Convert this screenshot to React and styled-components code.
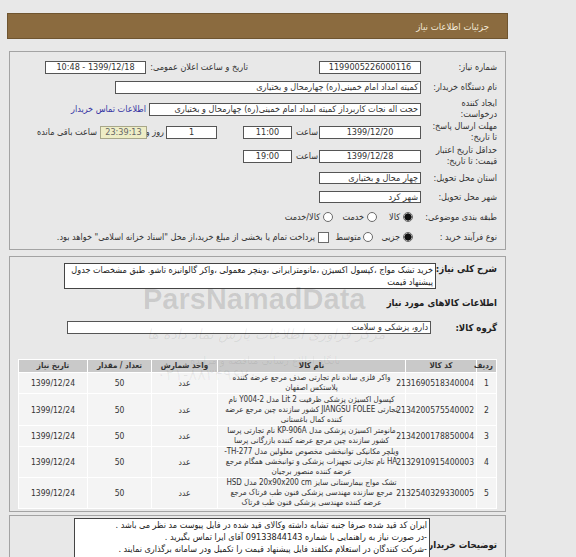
import React from "react";
import styled, { createGlobalStyle } from "styled-components";

const Global = createGlobalStyle`
  html, body { margin: 0; padding: 0; background: #e8e8e8; }
  body { font-family: "DejaVu Sans Condensed", "DejaVu Sans", sans-serif; color: #333; }
  * { box-sizing: border-box; }
`;

const Page = styled.div`
  position: relative;
  width: 501px;
  margin: 13px 0 0 7px;
  direction: rtl;
  font-size: 9px;
`;

const Header = styled.div`
  height: 26px;
  background: #8b6b3f;
  border: 1px solid #6f5530;
  display: flex;
  align-items: center;
  padding-right: 18px;
  color: #f3ead8;
  font-size: 9.5px;
`;

const Panel = styled.div`
  margin: ${(p) => p.$mt || 12}px 2px 0 2px;
  border: 1px solid #a3a3a3;
  padding: ${(p) => p.$pad || "6px 0 3px 0"};
`;

const Row = styled.div`
  display: flex;
  align-items: ${(p) => p.$align || "center"};
  height: ${(p) => (p.$h ? `${p.$h}px` : "auto")};
  margin-top: ${(p) => p.$mt || 0}px;
`;

const Label = styled.div`
  flex: none;
  width: ${(p) => p.$w || 84}px;
  padding-right: 8px;
  line-height: 11px;
  white-space: nowrap;
  font-weight: ${(p) => (p.$bold ? "bold" : "normal")};
  font-size: ${(p) => (p.$bold ? "9.5px" : "9px")};
  color: ${(p) => (p.$bold ? "#222" : "#333")};
`;

const Field = styled.div`
  flex: none;
  width: ${(p) => p.$w}px;
  height: ${(p) => p.$h || 13}px;
  margin-right: ${(p) => p.$m || 0}px;
  background: ${(p) => (p.$timer ? "#eeedc6" : "#fff")};
  border: 1px solid ${(p) => (p.$timer ? "#a8a78a" : "#555")};
  color: ${(p) => (p.$timer ? "#666" : "#333")};
  font-size: 9px;
  line-height: 11px;
  padding: 0 2px;
  text-align: ${(p) => p.$ta || "right"};
  white-space: nowrap;
  overflow: hidden;
`;

const Text = styled.div`
  flex: none;
  width: ${(p) => (p.$w ? `${p.$w}px` : "auto")};
  margin-right: ${(p) => p.$m || 0}px;
  white-space: nowrap;
  text-align: ${(p) => p.$ta || "right"};
  line-height: 11px;
`;

const Link = styled(Text)`
  color: #3535a3;
`;

const Radio = styled.span`
  flex: none;
  width: 10px;
  height: 10px;
  margin-right: ${(p) => p.$m || 0}px;
  border-radius: 50%;
  border: 1px solid #6a6a6a;
  background: ${(p) => (p.$on ? "radial-gradient(circle, #111 0 3px, #555 3.5px, #fff 4px)" : "#fff")};
`;

const Check = styled.span`
  flex: none;
  width: 11px;
  height: 11px;
  margin-right: ${(p) => p.$m || 0}px;
  border: 1px solid #6a6a6a;
  background: #fff;
`;

const TextArea = styled.div`
  flex: none;
  width: ${(p) => p.$w}px;
  min-height: ${(p) => p.$h}px;
  background: #fff;
  border: 1px solid #444;
  padding: 0 2px;
  line-height: 12px;
  font-size: 9px;
  color: #222;
  white-space: nowrap;
`;

const Section = styled.div`
  padding-right: 8px;
  margin-top: 7px;
  line-height: 13px;
  font-weight: bold;
  font-size: 9.5px;
  color: #222;
`;

const Table = styled.table`
  width: 478px;
  margin: 25px 8px 0 9px;
  border-collapse: collapse;
  table-layout: fixed;
  background: #fff;
`;

const Th = styled.th`
  height: 13px;
  background: #c9c9c9;
  border: 1px solid #fff;
  color: #333;
  font-weight: bold;
  font-size: 8px;
  line-height: 10px;
  padding: 0 3px;
  text-align: ${(p) => (p.$first ? "right" : "center")};
`;

const Td = styled.td`
  background: #f4f4f4;
  border: 1px solid #fff;
  height: ${(p) => p.$h}px;
  line-height: 10px;
  padding: 0 2px;
  text-align: center;
  white-space: nowrap;
  color: #333;
  font-size: ${(p) => (p.$name ? "8px" : "8.5px")};
  letter-spacing: ${(p) => (p.$name ? "-0.1px" : "0")};
`;

const Watermark = styled.div`
  position: absolute;
  left: ${(p) => p.$x}px;
  top: ${(p) => p.$y}px;
  font-family: ${(p) => (p.$latin ? '"Liberation Sans", sans-serif' : '"DejaVu Sans", sans-serif')};
  font-size: ${(p) => p.$fs}px;
  font-weight: ${(p) => (p.$latin ? "bold" : "normal")};
  font-style: ${(p) => (p.$it ? "italic" : "normal")};
  color: rgba(0, 0, 0, ${(p) => p.$o || 0.13});
  white-space: nowrap;
  pointer-events: none;
  direction: ltr;
`;

const items = [
  { n: "1", code: "2131690518340004", name: ["واکر فلزی ساده نام تجارتی صدف مرجع عرضه کننده", "پلاستکس اصفهان"], h: 21 },
  {
    n: "2",
    code: "2134200575540002",
    name: [
      "کپسول اکسیژن پزشکی ظرفیت 2 Lit مدل Y004-2 نام",
      "تجارتی JIANGSU FOLEE کشور سازنده چین مرجع عرضه",
      "کننده کمال باغستانی",
    ],
    h: 32,
  },
  {
    n: "3",
    code: "2134200178850004",
    name: ["مانومتر اکسیژن پزشکی مدل KP-906A نام تجارتی پرسا", "کشور سازنده چین مرجع عرضه کننده بازرگانی پرسا"],
    h: 21,
  },
  {
    n: "4",
    code: "2132910915400003",
    name: [
      "ویلچر مکانیکی توانبخشی مخصوص معلولین مدل TH-277-",
      "HA نام تجارتی تجهیزات پزشکی و توانبخشی همگام مرجع",
      "عرضه کننده منصور برجیان",
    ],
    h: 31,
  },
  {
    n: "5",
    code: "2132540329330005",
    name: [
      "تشک مواج بیمارستانی سایز 20x90x200 cm مدل HSD",
      "مرجع سازنده مهندسی پزشکی فنون طب فرتاک مرجع",
      "عرضه کننده مهندسی پزشکی فنون طب فرتاک",
    ],
    h: 30,
  },
];

export default function App() {
  return (
    <>
      <Global />
      <Page>
        <Header>جزئیات اطلاعات نیاز</Header>

        <Panel>
          <Row $h={19}>
            <Label>شماره نیاز:</Label>
            <Field $w={102} $ta="center">1199005226000116</Field>
            <Text $w={99} $m={71}>تاریخ و ساعت اعلان عمومی:</Text>
            <Field $w={101} $m={3} $ta="center">1399/12/18 - 10:48</Field>
          </Row>
          <Row $h={21}>
            <Label>نام دستگاه خریدار:</Label>
            <Field $w={306}>کمیته امداد امام خمینی(ره) چهارمحال و بختیاری</Field>
          </Row>
          <Row $h={22}>
            <Label>
              ایجاد کننده
              <br />
              درخواست:
            </Label>
            <Field $w={272}>حجت اله نجات کاربرداز کمیته امداد امام خمینی(ره) چهارمحال و بختیاری</Field>
            <Link $m={3} $w={74}>اطلاعات تماس خریدار</Link>
          </Row>
          <Row $h={24}>
            <Label>
              مهلت ارسال پاسخ:
              <br />
              تا تاریخ:
            </Label>
            <Field $w={102} $ta="center">1399/12/20</Field>
            <Text $w={25} $m={1}>ساعت</Text>
            <Field $w={49} $m={1} $ta="center">11:00</Field>
            <Field $w={51} $m={26} $ta="center">1</Field>
            <Text $w={12} $m={2}>روز و</Text>
            <Field $w={47} $m={5} $ta="center" $timer>23:39:13</Field>
            <Text $w={64} $m={3}>ساعت باقی مانده</Text>
          </Row>
          <Row $h={24}>
            <Label>
              حداقل تاریخ اعتبار
              <br />
              قیمت: تا تاریخ:
            </Label>
            <Field $w={102} $ta="center">1399/12/28</Field>
            <Text $w={25} $m={1}>ساعت</Text>
            <Field $w={49} $m={1} $ta="center">19:00</Field>
          </Row>
          <Row $h={20}>
            <Label>استان محل تحویل:</Label>
            <Field $w={102} $h={12}>چهار محال و بختیاری</Field>
          </Row>
          <Row $h={18}>
            <Label>شهر محل تحویل:</Label>
            <Field $w={102} $h={12}>شهر کرد</Field>
          </Row>
          <Row $h={22}>
            <Label>طبقه بندی موضوعی:</Label>
            <Radio $on $m={8} />
            <Text $w={20} $m={3}>کالا</Text>
            <Radio $m={3} />
            <Text $w={21} $m={3}>خدمت</Text>
            <Radio $m={10} />
            <Text $w={37} $m={3}>کالا/خدمت</Text>
          </Row>
          <Row $h={18}>
            <Label>نوع فرآیند خرید :</Label>
            <Radio $on $m={8} />
            <Text $w={27} $m={3}>جزیی</Text>
            <Radio $m={0} />
            <Text $w={18} $m={2}>متوسط</Text>
            <Check $m={14} />
            <Text $w={265} $m={3}>پرداخت تمام یا بخشی از مبلغ خرید،از محل "اسناد خزانه اسلامی" خواهد بود.</Text>
          </Row>
        </Panel>

        <Panel $mt={6} $pad="6px 0 2px 0">
          <Row $align="flex-start">
            <Label $w={69} $bold>شرح کلی نیاز:</Label>
            <TextArea $w={372} $h={24}>
              خرید تشک مواج ،کپسول اکسیژن ،مانومترایرانی ،وینچر معمولی ،واکر گالوانیزه تاشو.  طبق مشخصات جدول
              <br />
              پیشنهاد قیمت
            </TextArea>
          </Row>
          <Section>اطلاعات کالاهای مورد نیاز</Section>
          <Row $mt={12}>
            <Label $w={74} $bold>گروه کالا:</Label>
            <Field $w={364}>دارو، پزشکی و سلامت</Field>
          </Row>
          <Table>
            <colgroup>
              <col style={{ width: 20 }} />
              <col style={{ width: 71 }} />
              <col style={{ width: 188 }} />
              <col style={{ width: 66 }} />
              <col style={{ width: 64 }} />
              <col style={{ width: 69 }} />
            </colgroup>
            <thead>
              <tr>
                <Th $first>ردیف</Th>
                <Th>کد کالا</Th>
                <Th>نام کالا</Th>
                <Th>واحد شمارش</Th>
                <Th>تعداد / مقدار</Th>
                <Th>تاریخ نیاز</Th>
              </tr>
            </thead>
            <tbody>
              {items.map((it) => (
                <tr key={it.n}>
                  <Td $h={it.h}>{it.n}</Td>
                  <Td $h={it.h}>{it.code}</Td>
                  <Td $h={it.h} $name>
                    {it.name.map((l, i) => (
                      <React.Fragment key={i}>
                        {i > 0 && <br />}
                        {l}
                      </React.Fragment>
                    ))}
                  </Td>
                  <Td $h={it.h}>عدد</Td>
                  <Td $h={it.h}>50</Td>
                  <Td $h={it.h}>1399/12/24</Td>
                </tr>
              ))}
            </tbody>
          </Table>
        </Panel>

        <Panel $mt={3} $pad="2px 0 0 0">
          <Row>
            <Label $w={75} $bold>توضیحات خریدار:</Label>
            <TextArea $w={356} $h={52}>
              ایران کد قید شده صرفا جنبه تشابه داشته وکالای قید شده در فایل پیوست مد نظر می باشد .
              <br />
              -در صورت نیاز به راهنمایی با شماره 09133844143 آقای ایرا   تماس بگیرید .
              <br />
              -شرکت کنندگان در استعلام مکلفند فایل پیشنهاد قیمت را تکمیل ودر سامانه برگذاری نمایند .
            </TextArea>
          </Row>
        </Panel>

        <Watermark $latin $x={136} $y={270} $fs={29} $o={0.13}>ParsNamadData</Watermark>
        <Watermark $x={140} $y={313} $fs={14} $it $o={0.07}>مرکز فراوری اطلاعات پارس نماد داده ها</Watermark>
        <Watermark $x={183} $y={342} $fs={10} $o={0.07}>پایگاه اطلاع رسانی مناقصه و مزایده</Watermark>
        <Watermark $x={150} $y={352} $fs={16} $o={0.06}>۰۲۱-۸۸۳۴۹۶۷۰</Watermark>
      </Page>
    </>
  );
}
